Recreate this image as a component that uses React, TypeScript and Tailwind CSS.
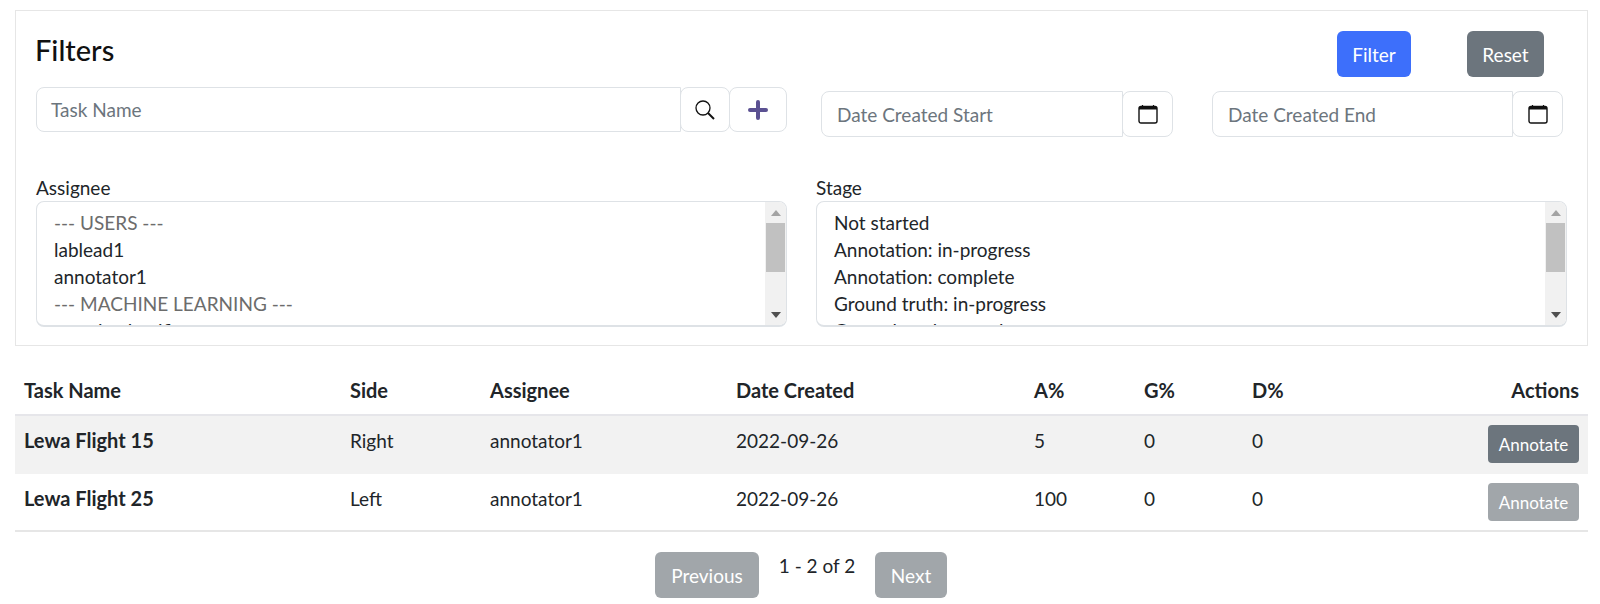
import React from 'react';

const FONT = "font-['Lato','Liberation_Sans',sans-serif]";

const Calendar = () => (
  <svg width="20" height="20" viewBox="0 0 20 20" fill="none">
    <rect x="1" y="2.5" width="18" height="16.5" rx="2" stroke="#111" strokeWidth="1.4" />
    <path d="M1 4a1.5 1.5 0 0 1 1.5-1.5h15A1.5 1.5 0 0 1 19 4v1.5H1z" fill="#111" />
    <path d="M4.5 1v2M15.5 1v2" stroke="#111" strokeWidth="1.2" />
  </svg>
);

const DateInput: React.FC<{ placeholder: string; inputWidth: string }> = ({ placeholder, inputWidth }) => (
  <div className="flex h-[46px]">
    <div className={`${inputWidth} flex items-center rounded-l-[8px] border border-[#dee2e6] pl-[15px] text-[#6c757d]`}>{placeholder}</div>
    <button type="button" className="-ml-px flex w-[51px] items-center justify-center rounded-[8px] border border-[#dee2e6]">
      <Calendar />
    </button>
  </div>
);

const ListBox: React.FC<{ label: string; options: { text: string; muted?: boolean }[] }> = ({ label, options }) => (
  <div>
    <div className="h-[27px] leading-[27px]">{label}</div>
    <div className="flex h-[126px] overflow-hidden rounded-[8px] border border-[#dee2e6] border-b-2">
      <div className="flex-1 overflow-hidden pl-[17px] pt-[7px]">
        {options.map((o) => (
          <div key={o.text} className={`h-[27px] leading-[27px] ${o.muted ? 'text-[#6c6c6c]' : 'text-[#212529]'}`}>{o.text}</div>
        ))}
      </div>
      <div className="flex w-[21px] flex-col items-center bg-[#f1f1f1]">
        <div className="flex h-[21px] items-center justify-center">
          <svg width="10" height="6" viewBox="0 0 10 6"><path d="M5 0l5 6H0z" fill="#a3a3a3" /></svg>
        </div>
        <div className="h-[49px] w-[19px] bg-[#c1c1c1]" />
        <div className="mt-auto flex h-[21px] items-center justify-center">
          <svg width="10" height="6" viewBox="0 0 10 6"><path d="M5 6l5-6H0z" fill="#505050" /></svg>
        </div>
      </div>
    </div>
  </div>
);

const rows = [
  { name: 'Lewa Flight 15', side: 'Right', a: '5', muted: false },
  { name: 'Lewa Flight 25', side: 'Left', a: '100', muted: true },
];

const cols = 'grid grid-cols-[326px_140px_246px_298px_110px_108px_1fr_100px]';

export default function App() {
  return (
    <div className={`${FONT} ml-[15px] w-[1573px] pt-[10px] text-[19px] leading-[27px] text-[#212529]`}>
      <div className="h-[336px] border border-[#e6e6e6] px-[20px] pt-[20px]">
        <div className="grid grid-cols-[751px_751px] gap-x-[29px]">
          <div>
            <h3 className="-ml-px h-[56px] pt-[1px] text-[29px] leading-[36px] font-medium text-[#111]">Filters</h3>
            <div className="flex h-[45px]">
              <div className="flex w-[645px] items-center rounded-l-[8px] border border-[#dee2e6] pl-[14px] text-[#6c757d]">Task Name</div>
              <button type="button" className="-ml-px flex w-[50px] items-center justify-center rounded-[8px] border border-[#dee2e6]">
                <svg width="20" height="20" viewBox="0 0 20 20" fill="none">
                  <circle cx="8" cy="8" r="7" stroke="#111" strokeWidth="1.3" />
                  <path d="M13 13l6 6" stroke="#111" strokeWidth="2" />
                </svg>
              </button>
              <button type="button" className="-ml-px flex w-[58px] items-center justify-center rounded-[8px] border border-[#dee2e6]">
                <svg width="20" height="20" viewBox="0 0 20 20"><path d="M10 2v16M2 10h16" stroke="#5b5192" strokeWidth="4" strokeLinecap="round" /></svg>
              </button>
            </div>
          </div>
          <div>
            <div className="flex h-[46px] justify-end pr-[23px]">
              <button type="button" className="h-[46px] w-[74px] rounded-[6px] bg-[#3d6ffb] text-white">Filter</button>
              <button type="button" className="ml-[56px] h-[46px] w-[77px] rounded-[6px] bg-[#6c757d] text-white">Reset</button>
            </div>
            <div className="mt-[14px] flex justify-between pl-[5px] pr-[4px]">
              <DateInput placeholder="Date Created Start" inputWidth="w-[302px]" />
              <DateInput placeholder="Date Created End" inputWidth="w-[301px]" />
            </div>
          </div>
        </div>
        <div className="mt-[37px] grid grid-cols-[751px_751px] gap-x-[29px]">
          <ListBox
            label="Assignee"
            options={[
              { text: '--- USERS ---', muted: true },
              { text: 'lablead1' },
              { text: 'annotator1' },
              { text: '--- MACHINE LEARNING ---', muted: true },
              { text: 'mosaic-classifier' },
            ]}
          />
          <ListBox
            label="Stage"
            options={[
              { text: 'Not started' },
              { text: 'Annotation: in-progress' },
              { text: 'Annotation: complete' },
              { text: 'Ground truth: in-progress' },
              { text: 'Ground truth: complete' },
            ]}
          />
        </div>
      </div>

      <div className={`${cols} mt-[31px] h-[39px] border-b-2 border-[#e6e6ea] pl-[9px] pr-[9px] text-[20px] font-bold`}>
        <div>Task Name</div>
        <div>Side</div>
        <div>Assignee</div>
        <div>Date Created</div>
        <div>A%</div>
        <div>G%</div>
        <div>D%</div>
        <div className="text-right">Actions</div>
      </div>
      {rows.map((r, i) => (
        <div key={r.name} className={`${cols} h-[58px] items-start border-[#e6e6e6] pl-[9px] pr-[9px] pt-[9px] ${i === 0 ? 'bg-[#f2f2f2]' : 'border-b-2'}`}>
          <div className="pt-[2px] text-[20px] font-bold">{r.name}</div>
          <div className="pt-[2px]">{r.side}</div>
          <div className="pt-[2px]">annotator1</div>
          <div className="pt-[2px]">2022-09-26</div>
          <div className="pt-[2px]">{r.a}</div>
          <div className="pt-[2px]">0</div>
          <div className="pt-[2px]">0</div>
          <div className="flex justify-end">
            <button type="button" className={`h-[38px] w-[91px] rounded-[4px] text-[17px] text-white ${r.muted ? 'bg-[#a1a6aa]' : 'bg-[#6c757d]'}`}>Annotate</button>
          </div>
        </div>
      ))}

      <div className="mt-[20px] flex justify-center pr-[1px]">
        <button type="button" className="h-[46px] w-[104px] rounded-[6px] bg-[#a1a6aa] text-white">Previous</button>
        <div className="w-[116px] text-center">1 - 2 of 2</div>
        <button type="button" className="h-[46px] w-[72px] rounded-[6px] bg-[#a1a6aa] text-white">Next</button>
      </div>
    </div>
  );
}
